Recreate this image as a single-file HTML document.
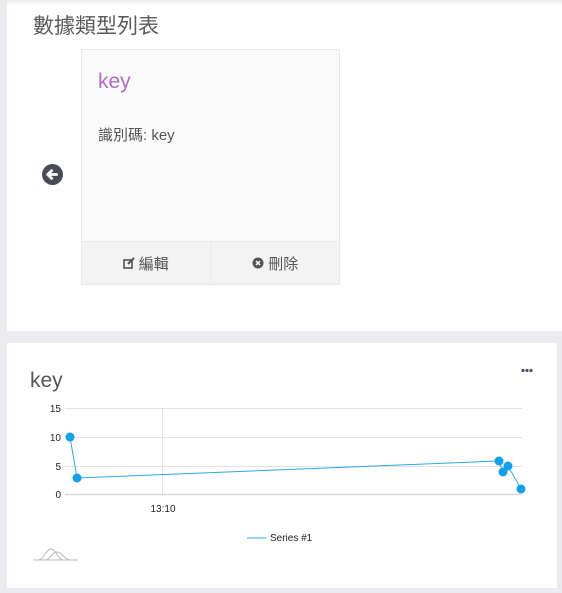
<!DOCTYPE html>
<html><head><meta charset="utf-8"><style>
*{margin:0;padding:0;box-sizing:border-box}
body{width:562px;height:593px;background:#ebebf0;font-family:"Liberation Sans","Noto Sans CJK TC",sans-serif;position:relative;overflow:hidden}
.p1{position:absolute;left:7px;top:0;width:555px;height:331px;background:#fff;box-shadow:inset 0 6px 6px -4px #e6e6e6}
.p2{position:absolute;left:7px;top:343px;width:550px;height:245px;background:#fff}
.h{position:absolute;left:33px;top:10px;font-size:21px;color:#5a5a5a}
.card{position:absolute;left:81px;top:49px;width:259px;height:236px;background:#fafafa;border:1px solid #e8e8e8}
.k{position:absolute;left:16px;top:20px;font-size:21px;color:#b06cc8}
.id{position:absolute;left:16px;top:74px;font-size:15px;color:#555}
.ft{position:absolute;left:0;top:191px;width:257px;height:43px;display:flex;border-top:1px solid #e8e8e8}
.ft div{flex:1;background:#f3f3f3;display:flex;align-items:center;justify-content:center;font-size:15px;color:#555;gap:4px}
.ft div:first-child{border-right:2px solid #eee}
</style></head><body>
<div class="p1">
<div class="h" style="left:26px">數據類型列表</div>
<svg style="position:absolute;left:35px;top:164px" width="21" height="21" viewBox="0 0 20 20"><circle cx="10" cy="10" r="10" fill="#484c55"/><path d="M15 10H6M10 5.5L5.5 10 10 14.5" stroke="#fff" stroke-width="2.6" fill="none"/></svg>
</div>
<div class="card">
<div class="k">key</div>
<div class="id">識別碼: key</div>
<div class="ft"><div><svg width="12" height="12" viewBox="0 0 12 12"><rect x="1" y="3" width="8" height="8" fill="none" stroke="#555" stroke-width="1.6"/><path d="M5 7L11 1" stroke="#555" stroke-width="2"/></svg>編輯</div><div><svg width="12" height="12" viewBox="0 0 12 12"><circle cx="6" cy="6" r="5.5" fill="#555"/><path d="M4 4l4 4M8 4l-4 4" stroke="#fff" stroke-width="1.5"/></svg>刪除</div></div>
</div>
<div class="p2">
<div style="position:absolute;left:23px;top:26px;font-size:21px;color:#555">key</div>
<svg style="position:absolute;left:514px;top:25px" width="14" height="5"><g fill="#5a4a66"><circle cx="2" cy="2.5" r="1.6"/><circle cx="6" cy="2.5" r="1.6"/><circle cx="10" cy="2.5" r="1.6"/></g></svg>
</div>
<svg style="position:absolute;left:0;top:400px" width="562" height="193">
<g stroke="#e3e3e3" stroke-width="1"><line x1="65" y1="8.5" x2="522" y2="8.5"/><line x1="65" y1="37.5" x2="522" y2="37.5"/><line x1="65" y1="66.5" x2="522" y2="66.5"/><line x1="162.5" y1="8" x2="162.5" y2="96"/></g>
<line x1="65" y1="94.5" x2="522" y2="94.5" stroke="#d8d8d8" stroke-width="1.5"/>
<g font-size="10" fill="#222" text-anchor="end"><text x="61" y="12">15</text><text x="61" y="41">10</text><text x="61" y="70">5</text><text x="61" y="98">0</text></g>
<text x="163" y="112" font-size="10" fill="#222" text-anchor="middle">13:10</text>
<polyline points="70,37 77,78 499,61 503,72 508,66 521,89" fill="none" stroke="#2aa8e8" stroke-width="1"/>
<g fill="#10a0ec"><circle cx="70" cy="37" r="4.5"/><circle cx="77" cy="78" r="4.5"/><circle cx="499" cy="61" r="4.5"/><circle cx="503" cy="72" r="4.5"/><circle cx="508" cy="66" r="4.5"/><circle cx="521" cy="89" r="4.5"/></g>
<line x1="247" y1="138" x2="266" y2="138" stroke="#2aa8e8"/>
<text x="270" y="141" font-size="10" fill="#222">Series #1</text>
<path d="M33 160H78M38 160C44 160 46 149 51 149 56 149 58 160 63 160M45 160C50 160 52 152 57 152 62 152 65 160 70 160" fill="none" stroke="#bbb" stroke-width="1"/>
</svg>
</body></html>
